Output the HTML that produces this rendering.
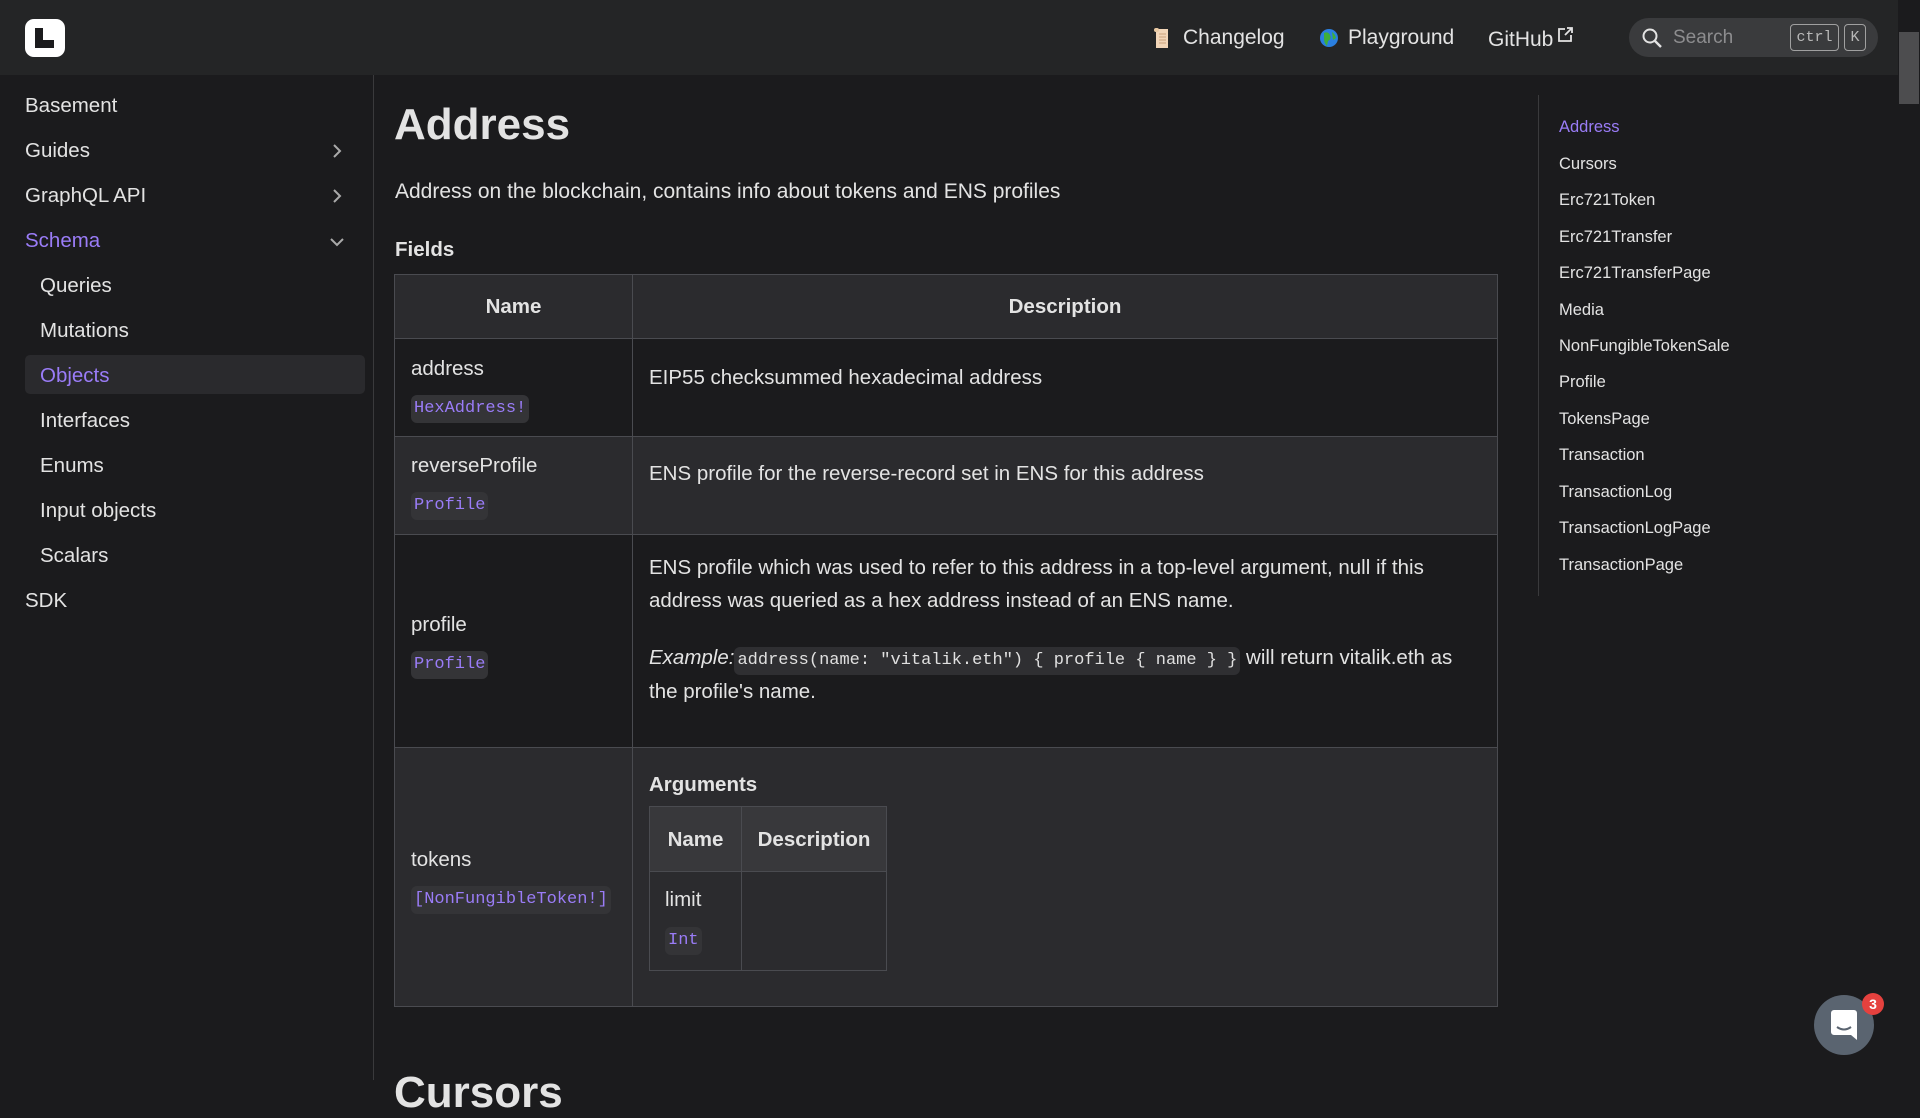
<!DOCTYPE html>
<html><head><meta charset="utf-8"><style>
*{box-sizing:border-box;margin:0;padding:0}
body{width:1920px;height:1080px;overflow:hidden;background:#1b1b1d;color:#e3e3e3;font-family:"Liberation Sans",sans-serif;position:relative}
.hdr{position:absolute;left:0;top:0;width:1898px;height:75px;background:#242526}
.logo{position:absolute;left:25px;top:19px;width:40px;height:38px;background:#fff;border-radius:9px}
.logo:before{content:"";position:absolute;left:10px;top:9px;width:8px;height:20px;background:#1b1b1d}
.logo:after{content:"";position:absolute;left:10px;top:21px;width:19px;height:8px;background:#1b1b1d}
.nav{position:absolute;top:26px;font-size:21px;color:#e3e3e3}
.search{position:absolute;left:1629px;top:18px;width:249px;height:39px;border-radius:20px;background:#3a3b3d}
.search span{position:absolute;left:44px;top:9px;font-size:19px;color:#8d8d8f}
.kbd{position:absolute;top:6px;height:27px;border:1px solid #a0a0a0;border-radius:4px;font-family:"Liberation Mono",monospace;font-size:15px;color:#b8b8b8;text-align:center;line-height:25px}
.sb{position:absolute;right:0;top:0;width:22px;height:1080px;background:#1b1b1d}
.sb div{position:absolute;left:1px;top:32px;width:20px;height:72px;background:#4d4d4f}
.side{position:absolute;left:0;top:75px;width:374px;height:1005px;border-right:1px solid #3a3a3c}
.si{position:absolute;left:25px;font-size:20.5px;color:#e3e3e3}
.sub{left:40px}
.chev{position:absolute;left:330px;width:14px;height:14px}
h1{position:absolute;left:394px;top:100px;font-size:44px;font-weight:bold;color:#e3e3e3}
.p{position:absolute;font-size:21px;color:#e3e3e3}
table{border-collapse:collapse;position:absolute}
td,th{border:1px solid #4a4b50;vertical-align:middle}
.t th{height:64px;font-size:20.5px;background:#2b2b2e}
.t td{padding:0 16px;font-size:20.5px;line-height:33px}
.code{display:inline-block;background:#343437;color:#9a7cf7;font-family:"Liberation Mono",monospace;font-size:17px;line-height:28px;padding:0 3px;border-radius:6px}
.c2{display:inline-block;background:#2f2f32;color:#e0e0e0;font-family:"Liberation Mono",monospace;font-size:17px;line-height:28px;padding:0 3px;border-radius:6px}
.toc{position:absolute;left:1538px;top:95px;height:501px;border-left:1px solid #3a3a3c}
.ti{position:absolute;left:1559px;font-size:16.5px;color:#e3e3e3}
</style></head><body>
<div class="hdr">
<div class="logo"></div>
<div class="nav" style="left:1153px;top:27px"><svg width="18" height="22" viewBox="0 0 18 22"><rect x="3" y="2" width="12" height="19" fill="#f2d6b8"/><rect x="1" y="1" width="5" height="4" rx="2" fill="#e8c9a3"/><path d="M6 7h7M6 10h7M6 13h7M6 16h7" stroke="#c9a27c" stroke-width="1"/></svg></div>
<div class="nav" style="left:1183px">Changelog</div>
<div class="nav" style="left:1319px;top:28px"><svg width="20" height="20"><circle cx="10" cy="10" r="9" fill="#2a7fe0"/><path d="M5 5q4-2 6 2t-2 6l-1 5q-3-3-3-7z" fill="#3fae3a"/><path d="M13 4q3 2 4 6l-3 2z" fill="#3fae3a"/></svg></div>
<div class="nav" style="left:1348px">Playground</div>
<div class="nav" style="left:1488px">GitHub<svg width="18" height="18" viewBox="0 0 18 18" style="margin-left:3px;vertical-align:2px"><path d="M9 3H3v12h12V9M11 2h5v5M16 2l-7 7" stroke="#e3e3e3" stroke-width="1.8" fill="none"/></svg></div>
<div class="search"><svg style="position:absolute;left:12px;top:9px" width="22" height="22"><circle cx="9" cy="9" r="6.5" stroke="#e3e3e3" stroke-width="2" fill="none"/><path d="M14 14l6 6" stroke="#e3e3e3" stroke-width="2.4"/></svg><span>Search</span>
<div class="kbd" style="left:161px;width:49px">ctrl</div><div class="kbd" style="left:215px;width:22px">K</div></div>
</div>
<div class="sb"><div></div></div>
<div class="side">
<div class="si" style="top:19px">Basement</div>
<div class="si" style="top:64px">Guides</div>
<svg class="chev" style="top:69px" viewBox="0 0 14 14"><path d="M4 1l6 6-6 6" stroke="#aaa" stroke-width="2" fill="none"/></svg>
<div class="si" style="top:109px">GraphQL API</div>
<svg class="chev" style="top:114px" viewBox="0 0 14 14"><path d="M4 1l6 6-6 6" stroke="#aaa" stroke-width="2" fill="none"/></svg>
<div class="si" style="top:154px;color:#9a7cf7">Schema</div>
<svg class="chev" style="top:160px" viewBox="0 0 14 14"><path d="M1 4l6 6 6-6" stroke="#aaa" stroke-width="2" fill="none"/></svg>
<div class="si sub" style="top:199px">Queries</div>
<div class="si sub" style="top:244px">Mutations</div>
<div style="position:absolute;left:25px;top:280px;width:340px;height:39px;background:#2a2a2d;border-radius:5px"></div>
<div class="si sub" style="top:289px;color:#9a7cf7">Objects</div>
<div class="si sub" style="top:334px">Interfaces</div>
<div class="si sub" style="top:379px">Enums</div>
<div class="si sub" style="top:424px">Input objects</div>
<div class="si sub" style="top:469px">Scalars</div>
<div class="si" style="top:514px">SDK</div>
</div>
<h1>Address</h1>
<div class="p" style="left:395px;top:180px">Address on the blockchain, contains info about tokens and ENS profiles</div>
<div class="p" style="left:395px;top:238px;font-weight:bold;font-size:20.5px">Fields</div>
<table class="t" style="left:394px;top:274px;width:1104px">
<tr><th style="width:238px">Name</th><th>Description</th></tr>
<tr style="height:98px"><td><div style="line-height:26px;padding-top:4px">address</div><div style="margin-top:7px"><span class="code">HexAddress!</span></div></td><td style="vertical-align:top;padding-top:22px">EIP55 checksummed hexadecimal address</td></tr>
<tr style="height:98px;background:#2b2b2e"><td><div style="line-height:26px;padding-top:2px">reverseProfile</div><div style="margin-top:7px"><span class="code">Profile</span></div></td><td style="vertical-align:top;padding-top:20px">ENS profile for the reverse-record set in ENS for this address</td></tr>
<tr style="height:213px"><td><div style="line-height:26px;padding-top:8px">profile</div><div style="margin-top:7px"><span class="code">Profile</span></div></td><td style="vertical-align:top;padding-top:16px">ENS profile which was used to refer to this address in a top-level argument, null if this address was queried as a hex address instead of an ENS name.<div style="margin-top:24px"><i>Example:</i><span class="c2">address(name: "vitalik.eth") { profile { name } }</span> will return vitalik.eth as the profile's name.</div></td></tr>
<tr style="height:258px;background:#2b2b2e"><td><div style="line-height:26px;padding-top:6px">tokens</div><div style="margin-top:7px"><span class="code">[NonFungibleToken!]</span></div></td><td style="vertical-align:top;padding-top:0"><div style="position:relative;height:258px">
<div style="position:absolute;left:0;top:20px;font-weight:bold">Arguments</div>
<table style="left:0;top:58px;width:238px">
<tr><th style="width:92px;height:65px;background:#38383b">Name</th><th style="background:#38383b">Description</th></tr>
<tr style="height:99px"><td style="padding:0 15px"><div style="line-height:26px">limit</div><div style="margin-top:8px"><span class="code">Int</span></div></td><td></td></tr>
</table></div></td></tr>
</table>
<div style="position:absolute;left:394px;top:1068px;font-size:44px;font-weight:bold;color:#e3e3e3">Cursors</div>
<div class="toc"></div>
<div class="ti" style="top:118px;color:#9a7cf7">Address</div>
<div class="ti" style="top:155px">Cursors</div>
<div class="ti" style="top:191px">Erc721Token</div>
<div class="ti" style="top:228px">Erc721Transfer</div>
<div class="ti" style="top:264px">Erc721TransferPage</div>
<div class="ti" style="top:301px">Media</div>
<div class="ti" style="top:337px">NonFungibleTokenSale</div>
<div class="ti" style="top:373px">Profile</div>
<div class="ti" style="top:410px">TokensPage</div>
<div class="ti" style="top:446px">Transaction</div>
<div class="ti" style="top:483px">TransactionLog</div>
<div class="ti" style="top:519px">TransactionLogPage</div>
<div class="ti" style="top:556px">TransactionPage</div>
<div style="position:absolute;left:1814px;top:995px;width:60px;height:60px;border-radius:50%;background:#5a6470"></div>
<svg style="position:absolute;left:1831px;top:1010px" width="26" height="30" viewBox="0 0 26 30"><path d="M3 0h20a3 3 0 0 1 3 3v27l-6-5H3a3 3 0 0 1-3-3V3a3 3 0 0 1 3-3z" fill="#fff"/><path d="M6 17q7 5 14 0" stroke="#5a6470" stroke-width="2" fill="none"/></svg>
<div style="position:absolute;left:1862px;top:993px;width:22px;height:22px;border-radius:50%;background:#e5413e;color:#fff;font-size:14px;font-weight:bold;text-align:center;line-height:22px">3</div>
</body></html>
